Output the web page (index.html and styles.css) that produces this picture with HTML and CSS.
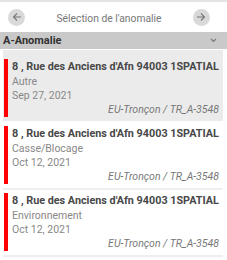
FILE: index.html
```html
<!DOCTYPE html>
<html lang="fr">

<head>
  <meta charset="UTF-8" />
  <meta name="viewport" content="width=device-width, initial-scale=1.0" />
  <title>Sélection de l'anomalie</title>
  <link rel="stylesheet" href="styles.css">
</head>

<body>
  <div class="topbar">
    <button class="round" aria-label="Précédent">
      <svg width="10" height="10" viewBox="0 0 10 10"><path d="M9 5H1.5M5 1.5L1.5 5 5 8.5" fill="none" stroke="#777" stroke-width="1.1"/></svg>
    </button>
    <div class="title">Sélection de l'anomalie</div>
    <button class="round" aria-label="Suivant">
      <svg width="10" height="10" viewBox="0 0 10 10"><path d="M1 5h7.5M5 1.5L8.5 5 5 8.5" fill="none" stroke="#777" stroke-width="1.1"/></svg>
    </button>
  </div>

  <div class="group">
    <span>A-Anomalie</span>
    <svg width="7" height="5" viewBox="0 0 7 5"><path d="M1 1l2.5 2.5L6 1" fill="none" stroke="#777" stroke-width="1.1"/></svg>
  </div>

  <ul class="list">
    <li class="item selected">
      <div class="bar"></div>
      <div class="info">
        <div class="addr">8 , Rue des Anciens d'Afn 94003 1SPATIAL</div>
        <div class="sub">Autre</div>
        <div class="sub">Sep 27, 2021</div>
        <div class="ref">EU-Tronçon / TR_A-3548</div>
      </div>
    </li>
    <li class="item">
      <div class="bar"></div>
      <div class="info">
        <div class="addr">8 , Rue des Anciens d'Afn 94003 1SPATIAL</div>
        <div class="sub">Casse/Blocage</div>
        <div class="sub">Oct 12, 2021</div>
        <div class="ref">EU-Tronçon / TR_A-3548</div>
      </div>
    </li>
    <li class="item">
      <div class="bar"></div>
      <div class="info">
        <div class="addr">8 , Rue des Anciens d'Afn 94003 1SPATIAL</div>
        <div class="sub">Environnement</div>
        <div class="sub">Oct 12, 2021</div>
        <div class="ref">EU-Tronçon / TR_A-3548</div>
      </div>
    </li>
  </ul>
</body>

</html>
```

FILE: styles.css
```css
body {
  margin: 0;
  font-family: Roboto, 'Liberation Sans', sans-serif;
  font-size: 10.5px;
  color: #444;
  background: #fff;
  width: 227px;
  height: 260px;
  overflow: hidden;
}
.topbar {
  border-top: 2px solid #e4e4e4;
  height: 30px;
  display: flex;
  align-items: center;
  justify-content: space-between;
  padding: 0 17px 0 8px;
}
.round {
  width: 17px;
  height: 17px;
  border-radius: 50%;
  border: none;
  padding: 0;
  background: #d9d9d9;
  display: flex;
  align-items: center;
  justify-content: center;
}
.title {
  color: #777;
  font-size: 10.3px;
  padding-top: 3px;
}
.group {
  background: #c9c9c9;
  height: 17px;
  display: flex;
  align-items: center;
  justify-content: space-between;
  padding: 0 10px 0 3px;
  font-weight: bold;
  font-size: 11px;
  color: #333;
}
.list {
  list-style: none;
  margin: 0;
  padding: 1px 4px 0 3px;
}
.item {
  display: flex;
  padding: 3px 0 4px 1px;
  border-bottom: 2px solid #efefef;
}
.item.selected {
  background: #ebebeb;
  padding-top: 9px;
  border-bottom-color: #fff;
}
.bar {
  width: 4px;
  background: #f00;
  flex-shrink: 0;
}
.info {
  flex: 1;
  padding: 1px 4px 0 4px;
  line-height: 14.5px;
}
.addr {
  font-weight: bold;
  color: #484848;
  font-size: 10.8px;
  white-space: nowrap;
}
.sub {
  color: #888;
}
.ref {
  color: #777;
  font-style: italic;
  text-align: right;
  margin-top: -1px;
}
```
